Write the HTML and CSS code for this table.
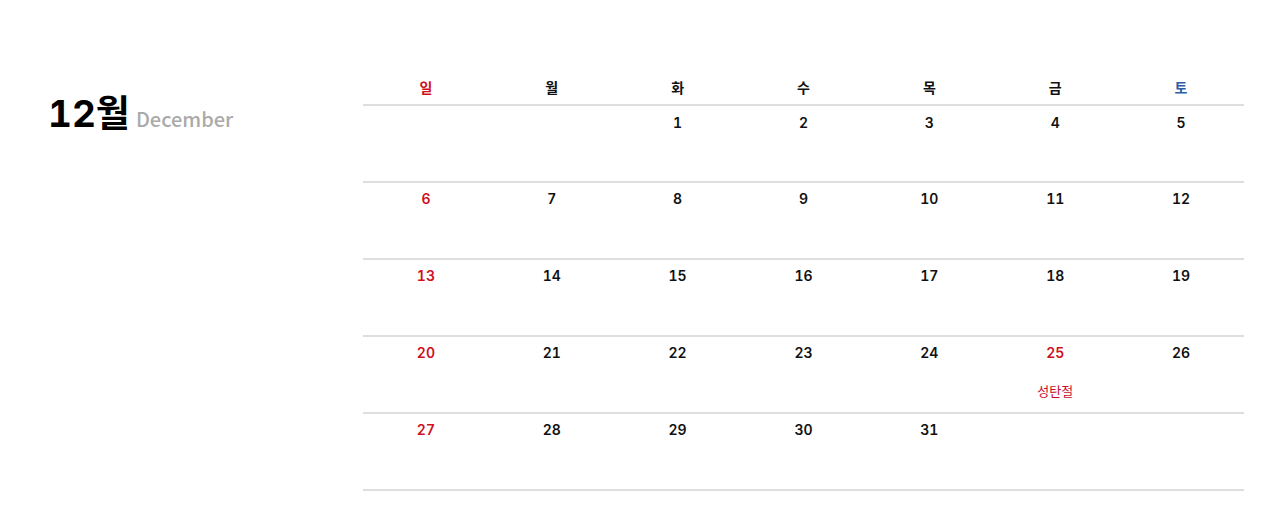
FILE: index.html
```html
<!DOCTYPE html>
<html lang="ko">
<head>
<meta charset="utf-8">
<link rel="stylesheet" href="styles.css">
</head>
<body>
<div class="page">
  <div class="side">
    <h1 class="title"><span class="month">12월</span><span class="eng">December</span></h1>
  </div>
  <div class="cal">
    <div class="head">
      <div class="hd sun">일</div><div class="hd">월</div><div class="hd">화</div><div class="hd">수</div><div class="hd">목</div><div class="hd">금</div><div class="hd sat">토</div>
    </div>
    <div class="week first">
      <div class="day"></div><div class="day"></div><div class="day"><span class="num">1</span></div><div class="day"><span class="num">2</span></div><div class="day"><span class="num">3</span></div><div class="day"><span class="num">4</span></div><div class="day"><span class="num">5</span></div>
    </div>
    <div class="week">
      <div class="day"><span class="num red">6</span></div><div class="day"><span class="num">7</span></div><div class="day"><span class="num">8</span></div><div class="day"><span class="num">9</span></div><div class="day"><span class="num">10</span></div><div class="day"><span class="num">11</span></div><div class="day"><span class="num">12</span></div>
    </div>
    <div class="week">
      <div class="day"><span class="num red">13</span></div><div class="day"><span class="num">14</span></div><div class="day"><span class="num">15</span></div><div class="day"><span class="num">16</span></div><div class="day"><span class="num">17</span></div><div class="day"><span class="num">18</span></div><div class="day"><span class="num">19</span></div>
    </div>
    <div class="week">
      <div class="day"><span class="num red">20</span></div><div class="day"><span class="num">21</span></div><div class="day"><span class="num">22</span></div><div class="day"><span class="num">23</span></div><div class="day"><span class="num">24</span></div><div class="day"><span class="num red">25</span><span class="holiday">성탄절</span></div><div class="day"><span class="num">26</span></div>
    </div>
    <div class="week">
      <div class="day"><span class="num red">27</span></div><div class="day"><span class="num">28</span></div><div class="day"><span class="num">29</span></div><div class="day"><span class="num">30</span></div><div class="day"><span class="num">31</span></div><div class="day"></div><div class="day"></div>
    </div>
  </div>
</div>
</body>
</html>
```
FILE: styles.css
```css
* { box-sizing: border-box; }
html, body { margin: 0; padding: 0; background: #fff; }
body {
  font-family: Inter, "Noto Sans CJK KR", sans-serif;
  font-variant-numeric: tabular-nums;
  color: #111;
}
.page {
  display: flex;
  width: 1280px;
  height: 522px;
  padding: 76px 36px 0 48px;
}
.side {
  width: 315px;
  flex: none;
}
.title {
  margin: 15px 0 0 0;
  display: flex;
  align-items: baseline;
  gap: 6px;
  font-weight: 700;
}
.month {
  font-size: 37px;
  line-height: 46px;
  color: #000;
}
.eng {
  font-family: "Noto Sans CJK KR", "Noto Sans", sans-serif;
  font-size: 20px;
  font-weight: 500;
  color: #aaaaaa;
}
.cal {
  width: 881px;
  flex: none;
}
.head, .week {
  display: grid;
  grid-template-columns: repeat(7, 1fr);
  border-bottom: 2px solid #dedede;
}
.head { height: 30px; }
.hd {
  text-align: center;
  font-size: 14px;
  font-weight: 700;
  line-height: 24px;
}
.sun { color: #d0101e; }
.sat { color: #2b5ea6; }
.week { height: 77px; }
.day {
  display: flex;
  flex-direction: column;
  align-items: center;
  padding-top: 6px;
}
.first .day { padding-top: 7px; }
.num {
  font-size: 14px;
  font-weight: 600;
  line-height: 20px;
}
.red { color: #d0101e; }
.holiday {
  margin-top: 19px;
  font-size: 13px;
  font-weight: 400;
  line-height: 18px;
  color: #c8102e;
}
```
